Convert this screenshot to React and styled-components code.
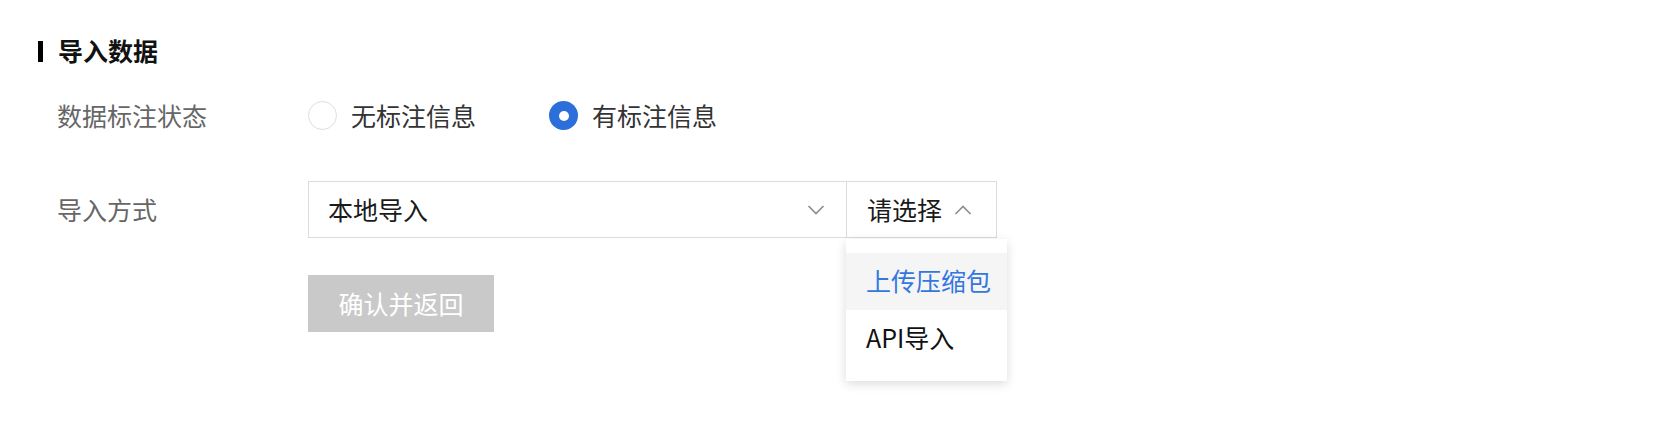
import React from "react";
import styled, { createGlobalStyle } from "styled-components";

const Global = createGlobalStyle`
  html, body { margin: 0; padding: 0; background: #fff; }
  body { font-family: "Noto Sans CJK SC", "Noto Sans", sans-serif; }
  * { box-sizing: border-box; }
`;

const Page = styled.div`
  width: 1678px;
  height: 438px;
  padding: 38px 0 0 38px;
  background: #fff;
`;

const SectionTitle = styled.h2`
  margin: 0;
  display: flex;
  align-items: center;
  height: 24px;
  font-size: 25px;
  font-weight: 700;
  color: #111;
  line-height: 24px;
  &::before {
    content: "";
    width: 5px;
    height: 21px;
    margin-top: 2px;
    background: #000;
    margin-right: 15px;
  }
`;

const Form = styled.div`
  margin: 25px 0 0 19px;
  display: flex;
  flex-direction: column;
  gap: 37px;
`;

const Row = styled.div`
  display: flex;
  align-items: center;
  height: 57px;
`;

const Label = styled.div`
  width: 251px;
  font-size: 25px;
  color: #666;
  line-height: 1;
`;

const RadioGroup = styled.div`
  display: flex;
  align-items: center;
  gap: 73px;
`;

const RadioOption = styled.label`
  display: flex;
  align-items: center;
  gap: 14px;
  font-size: 25px;
  color: #333;
  line-height: 1;
`;

const RadioCircle = styled.span`
  width: 29px;
  height: 29px;
  border-radius: 50%;
  display: flex;
  align-items: center;
  justify-content: center;
  border: ${(p) => (p.$checked ? "none" : "1px solid #dedede")};
  background: ${(p) => (p.$checked ? "#2c6fdb" : "#fff")};
  &::after {
    content: "";
    width: 10px;
    height: 10px;
    border-radius: 50%;
    background: #fff;
    display: ${(p) => (p.$checked ? "block" : "none")};
  }
`;

const Select = styled.div`
  display: flex;
  width: 689px;
  height: 57px;
  border: 1px solid #dcdcdc;
`;

const SelectPart = styled.div`
  position: relative;
  display: flex;
  align-items: center;
  justify-content: space-between;
  width: ${(p) => p.$width}px;
  flex: ${(p) => (p.$width ? "none" : 1)};
  padding: ${(p) => p.$pad};
  border-left: ${(p) => (p.$divided ? "1px solid #dcdcdc" : "none")};
  font-size: 25px;
  color: #1a1a1a;
  line-height: 1;
`;

const Dropdown = styled.ul`
  position: absolute;
  left: -1px;
  top: calc(100% + 2px);
  width: 161px;
  margin: 0;
  padding: 14px 0;
  list-style: none;
  background: #fff;
  box-shadow: 0 3px 10px rgba(0, 0, 0, 0.14);
  z-index: 2;
`;

const DropItem = styled.li`
  height: 57px;
  display: flex;
  align-items: center;
  padding-left: 20px;
  padding-bottom: 2px;
  font-size: 25px;
  line-height: 1;
  color: ${(p) => (p.$active ? "#3477de" : "#111")};
  background: ${(p) => (p.$active ? "#f5f5f5" : "#fff")};
`;

const Button = styled.button`
  width: 186px;
  height: 57px;
  margin-left: 251px;
  border: none;
  background: #c9c9c9;
  color: #fff;
  font-family: inherit;
  font-size: 25px;
  line-height: 1;
  padding: 0;
`;

const Chevron = ({ up }) => (
  <svg width="18" height="10" viewBox="0 0 18 10" fill="none">
    <polyline
      points={up ? "1.5,9 9,1.5 16.5,9" : "1.5,1 9,8.5 16.5,1"}
      stroke="#8f8f8f"
      strokeWidth="1.7"
      fill="none"
    />
  </svg>
);

export default function App() {
  return (
    <Page>
      <Global />
      <SectionTitle>导入数据</SectionTitle>
      <Form>
        <Row>
          <Label>数据标注状态</Label>
          <RadioGroup>
            <RadioOption>
              <RadioCircle />
              无标注信息
            </RadioOption>
            <RadioOption>
              <RadioCircle $checked />
              有标注信息
            </RadioOption>
          </RadioGroup>
        </Row>
        <Row>
          <Label>导入方式</Label>
          <Select>
            <SelectPart $width={537} $pad="0 21px 0 19px">
              本地导入
              <Chevron />
            </SelectPart>
            <SelectPart $divided $pad="0 24px 0 20px">
              请选择
              <Chevron up />
              <Dropdown>
                <DropItem $active>上传压缩包</DropItem>
                <DropItem>API导入</DropItem>
              </Dropdown>
            </SelectPart>
          </Select>
        </Row>
        <Row>
          <Button>确认并返回</Button>
        </Row>
      </Form>
    </Page>
  );
}
